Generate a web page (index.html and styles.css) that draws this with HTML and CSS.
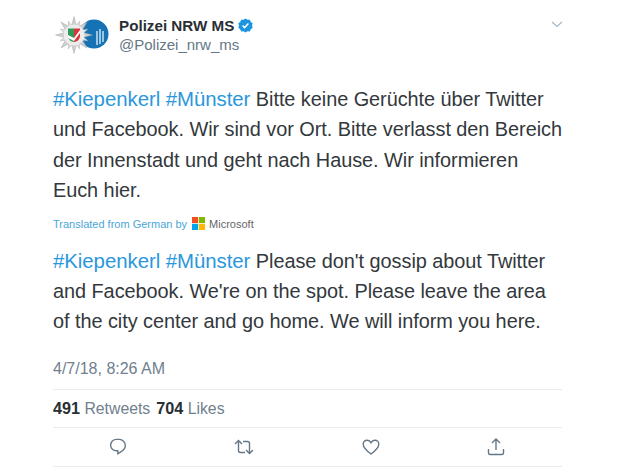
FILE: index.html
```html
<!DOCTYPE html>
<html lang="de">
<head>
<meta charset="utf-8">
<title>Polizei NRW MS</title>
<link rel="stylesheet" href="styles.css">
</head>
<body>
<main class="tweet">
  <header class="head">
    <svg class="avatar" width="66" height="42" viewBox="0 0 66 42">
      <defs>
        <path id="ray" d="M21 2.500L23.500 12H18.500z" fill="#cfcfcf" stroke="#9c9c9c" stroke-width=".4"/>
        <path id="short" d="M21 6L23 12H19z" fill="#dedede" stroke="#a8a8a8" stroke-width=".4"/>
      </defs>
      <circle cx="41" cy="20" r="14.500" fill="#1573b5"/>
      <g fill="#9cc5e2"><rect x="43" y="17" width="2" height="14"/><rect x="46" y="15" width="2" height="15"/><rect x="49" y="17" width="2" height="11"/></g>
      <use href="#ray"/><use href="#ray" transform="rotate(45 21 21)"/><use href="#ray" transform="rotate(90 21 21)"/><use href="#ray" transform="rotate(135 21 21)"/><use href="#ray" transform="rotate(180 21 21)"/><use href="#ray" transform="rotate(225 21 21)"/><use href="#ray" transform="rotate(270 21 21)"/><use href="#ray" transform="rotate(315 21 21)"/>
      <use href="#short" transform="rotate(22.500 21 21)"/><use href="#short" transform="rotate(67.500 21 21)"/><use href="#short" transform="rotate(112.500 21 21)"/><use href="#short" transform="rotate(157.500 21 21)"/><use href="#short" transform="rotate(202.500 21 21)"/><use href="#short" transform="rotate(247.500 21 21)"/><use href="#short" transform="rotate(292.500 21 21)"/><use href="#short" transform="rotate(337.500 21 21)"/>
      <circle cx="21" cy="21" r="10.500" fill="#ececec"/>
      <path d="M15 14.500h6V28c-3 0-6-3-6-6z" fill="#2f9a57"/>
      <path d="M21 14.500h6V22c0 3-3 6-6 6z" fill="#d8363a"/>
      <path d="M15 21l6 3 6-8v3l-6 8-6-3z" fill="#fff"/>
    </svg>
    <div class="names">
      <div class="name-row"><span class="name">Polizei NRW MS</span>
        <svg class="badge" width="15" height="15" viewBox="0 0 15 15"><path d="M7.500 .5l2 1.300 2.400-.1.9 2.200 1.900 1.400-.7 2.200.7 2.300-1.900 1.400-.9 2.200-2.400-.1-2 1.300-2-1.300-2.400.1-.9-2.200L.3 9.800 1 7.500.3 5.300l1.900-1.400.9-2.200 2.400.1z" fill="#1c95e0"/><path d="M4.600 7.600l2 2 3.800-4" fill="none" stroke="#fff" stroke-width="1.500"/></svg>
      </div>
      <div class="handle">@Polizei_nrw_ms</div>
    </div>
    <svg class="caret" width="12" height="7" viewBox="0 0 12 7"><path d="M1 1l5 4.500L11 1" fill="none" stroke="#aab8c2" stroke-width="1.300"/></svg>
  </header>
  <p class="text"><span class="tag">#Kiepenkerl #Münster</span> Bitte keine Gerüchte über Twitter und Facebook. Wir sind vor Ort. Bitte verlasst den Bereich der Innenstadt und geht nach Hause. Wir informieren Euch hier.</p>
  <div class="translated">
    <span>Translated from German by</span>
    <svg class="ms" width="13" height="13" viewBox="0 0 14 14"><rect width="6.600" height="6.600" fill="#f25022"/><rect x="7.400" width="6.600" height="6.600" fill="#7fba00"/><rect y="7.400" width="6.600" height="6.600" fill="#00a4ef"/><rect x="7.400" y="7.400" width="6.600" height="6.600" fill="#ffb900"/></svg>
    <span class="ms-name">Microsoft</span>
  </div>
  <p class="text"><span class="tag">#Kiepenkerl #Münster</span> Please don't gossip about Twitter and Facebook. We're on the spot. Please leave the area of the city center and go home. We will inform you here.</p>
  <div class="date">4/7/18, 8:26 AM</div>
  <div class="stats"><b>491</b> <span class="label">Retweets</span><b class="second">704</b> <span class="label">Likes</span></div>
  <nav class="actions">
    <svg width="18" height="18" viewBox="0 0 18 18"><path d="M7.500 2h3a6.500 6.500 0 0 1 6.200 6.300c0 3.200-2.400 5.400-5.200 7L8.900 17v-3.200H7.500A5.900 5.900 0 0 1 1.400 8 6 6 0 0 1 7.500 2z" transform="translate(.3 -.5) scale(.96)" fill="none" stroke="#657786" stroke-width="1.400"/></svg>
    <svg width="20" height="18" viewBox="0 0 20 18"><path d="M1 6l3.500-3.500L8 6M4.500 3v9.500a2 2 0 0 0 2 2H11M19 12l-3.500 3.500L12 12M15.500 15V5.500a2 2 0 0 0-2-2H9" fill="none" stroke="#657786" stroke-width="1.400"/></svg>
    <svg width="18" height="18" viewBox="0 0 18 18"><path d="M9 16C5 13 1.200 10 1.200 6.200 1.200 3.800 3 2.200 5 2.200c1.800 0 3.200 1 4 2.600.8-1.600 2.200-2.600 4-2.600 2 0 3.800 1.600 3.800 4C16.800 10 13 13 9 16z" fill="none" stroke="#657786" stroke-width="1.400"/></svg>
    <svg width="18" height="18" viewBox="0 0 18 18"><path d="M9 12V1.500M5 5l4-4 4 4M1.500 11v4a1.500 1.500 0 0 0 1.500 1.500h12a1.500 1.500 0 0 0 1.500-1.500v-4" fill="none" stroke="#657786" stroke-width="1.400"/></svg>
  </nav>
</main>
</body>
</html>
```
FILE: styles.css
```css
* { box-sizing: border-box; }
html, body { margin: 0; background: #fff; }
body { font-family: "Liberation Sans", Arial, sans-serif; color: #14171a; height: 470px; overflow: hidden; }
.tweet { width: 639px; padding: 14px 77px 0 53px; }
.head { display: flex; align-items: flex-start; height: 70px; }
.avatar { flex: none; }
.names { padding-top: 1px; }
.name-row { display: flex; align-items: center; gap: 4px; height: 20px; }
.name { font-size: 15.200px; font-weight: 700; color: #292f33; }
.handle { font-size: 15px; color: #657786; margin-top: 1px; }
.caret { margin-left: auto; margin-top: 7px; margin-right: -1px; }
.text { margin: 0 -5px 0 0; font-size: 19.900px; letter-spacing: -0.05px; line-height: 30.400px; color: #33383c; }
.tag { color: #2a97dc; font-size: 20.400px; }
.translated { display: flex; align-items: center; gap: 4px; height: 26px; margin-top: 5px; margin-bottom: 9px; font-size: 11px; color: #4aa6d8; }
.ms { margin-left: 1px; }
.ms-name { color: #666; }
.date { font-size: 16px; color: #70808e; margin-top: 17px; height: 35px; line-height: 30px; }
.stats { border-top: 1px solid #e6ecf0; border-bottom: 1px solid #e6ecf0; height: 39px; line-height: 37px; font-size: 15.800px; color: #70808e; }
.stats b { color: #292f33; font-size: 16.200px; }
.second { margin-left: 6px; }
.actions { display: flex; justify-content: space-between; align-items: center; height: 39px; padding: 1px 57px 0 56px; border-bottom: 1px solid #e6ecf0; }
```
